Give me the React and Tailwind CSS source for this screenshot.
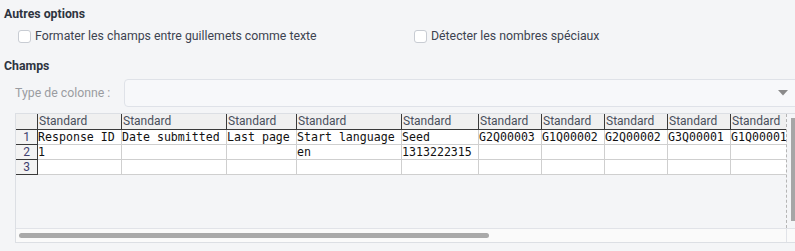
import React from "react";

const widths = [84, 105, 70, 105, 77, 63, 63, 63, 63, 63];

const rows = [
  ["Response ID", "Date submitted", "Last page", "Start language", "Seed", "G2Q00003", "G1Q00002", "G2Q00002", "G3Q00001", "G1Q00001"],
  ["1", "", "", "en", "1313222315", "", "", "", "", ""],
  ["", "", "", "", "", "", "", "", "", ""],
];

const Checkbox = ({ label }) => (
  <label className="flex items-center gap-[4px] h-4">
    <span className="w-[13px] h-[13px] rounded-[3px] border border-[#c8ccd3] bg-white shrink-0" />
    <span className="text-[#3d4350]">{label}</span>
  </label>
);

const App = () => {
  return (
    <div
      className="w-[795px] h-[251px] overflow-hidden bg-[#f4f5f7] text-[12.3px] leading-4"
      style={{ fontFamily: "Roboto, 'Liberation Sans', sans-serif" }}
    >
      <div className="pt-[6px] pl-[4px] font-bold text-[#2e3440]">Autres options</div>

      <div className="flex mt-[6px] pl-[18px]">
        <div className="w-[396px]">
          <Checkbox label="Formater les champs entre guillemets comme texte" />
        </div>
        <Checkbox label="Détecter les nombres spéciaux" />
      </div>

      <div className="mt-[14px] pl-[4px] font-bold text-[#2e3440]">Champs</div>

      <div className="flex items-center mt-[5px] pl-[15px] mr-[-4px]">
        <span className="w-[109px] text-[#9a9ca1]">Type de colonne :</span>
        <div className="flex-1 h-[28px] rounded-[4px] border border-[#dfe2e8] bg-[#f7f8fa] flex items-center justify-end pr-[10px]">
          <svg width="10" height="6" viewBox="0 0 10 6">
            <path d="M0 0 H10 L5 5.5 Z" fill="#8a8a8a" />
          </svg>
        </div>
      </div>

      {/* Grid */}
      <div className="mt-[6px] ml-[15px] mr-[-4px] h-[130px] border border-[#dcdfe4] flex flex-col">
        <div className="flex flex-1 min-h-0">
          <div className="w-[770px] overflow-hidden">
            <div className="flex w-max">
              <div className="w-[22px] h-[16px] bg-[#f0f0f0] border-r border-b border-[#3a3a3a]" />
              {widths.map((w, i) => (
                <div
                  key={i}
                  style={{ width: w }}
                  className="h-[16px] bg-[#f0f0f0] border-r border-b border-[#3a3a3a] pl-[1px] leading-[15px] text-[12px] text-[#4a4f5c] whitespace-nowrap overflow-hidden shrink-0"
                >
                  Standard
                </div>
              ))}
            </div>
            {rows.map((row, r) => (
              <div key={r} className="flex w-max">
                <div className="w-[22px] h-[15px] bg-[#f3f3f3] border-r border-b border-[#3a3a3a] text-center leading-[14px] text-[12px] text-[#3f3f6e] shrink-0">
                  {r + 1}
                </div>
                {row.map((cell, c) => (
                  <div
                    key={c}
                    style={{ width: widths[c], fontFamily: "'DejaVu Sans Mono', monospace" }}
                    className="h-[15px] bg-white border-r border-b border-[#cfcfcf] leading-[14px] text-[11.6px] text-[#111] whitespace-nowrap overflow-hidden shrink-0"
                  >
                    {cell}
                  </div>
                ))}
              </div>
            ))}
          </div>
          <div className="w-[9px] border-l border-dashed border-[#b5b5b5] pt-[4px] flex justify-end">
            <div className="w-[4px] h-[103px] bg-[#a6a6a6]" />
          </div>
        </div>
        <div className="h-[14px] border-t border-[#e1e3e8] bg-[#fafafa] flex">
          <div className="w-[770px] flex items-center pl-[3px]">
            <div className="w-[470px] h-[5px] rounded-full bg-[#a9a9a9]" />
          </div>
          <div className="flex-1 border-l border-[#e1e3e8]" />
        </div>
      </div>
    </div>
  );
};

export default App;
